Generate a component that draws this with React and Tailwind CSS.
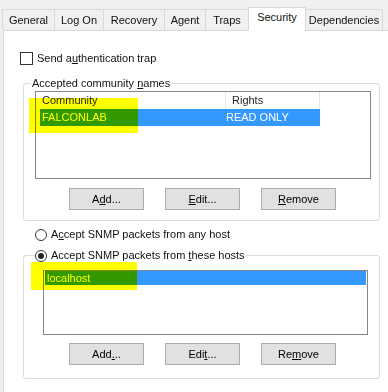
import React from 'react';

const tabs = [
  { label: 'General', w: 'w-[53px]' },
  { label: 'Log On', w: 'w-[50px]' },
  { label: 'Recovery', w: 'w-[62px]' },
  { label: 'Agent', w: 'w-[42px]' },
  { label: 'Traps', w: 'w-[44px]' },
  { label: 'Security', w: 'w-[58px]', active: true },
  { label: 'Dependencies', w: 'w-[78px]' },
];

function Button({ children }) {
  return (
    <button className="w-[75px] h-[22px] border border-[#adadad] bg-[#e1e1e1] text-[11px] text-black flex items-center justify-center">
      {children}
    </button>
  );
}

function Radio({ checked, children }) {
  return (
    <div className="flex items-center gap-[4px] h-[13px]">
      <span className="w-[12px] h-[12px] rounded-full border border-[#333] bg-white flex items-center justify-center">
        {checked && <span className="w-[6px] h-[6px] rounded-full bg-[#222]" />}
      </span>
      <span>{children}</span>
    </div>
  );
}

export default function App() {
  return (
    <div className="relative w-[388px] h-[392px] overflow-hidden bg-[#f0f0f0] font-['Liberation_Sans',Arial,sans-serif] text-[11px] leading-[13px] text-[#111]">
      {/* Tab strip */}
      <div className="flex items-end h-[30px] pl-[3px]">
        {tabs.map((t) =>
          t.active ? (
            <div
              key={t.label}
              className={`${t.w} h-[24px] -ml-px -mb-px relative z-10 bg-white border border-b-0 border-[#d9d9d9] flex items-start justify-center pt-[3px] text-[11px]`}
            >
              {t.label}
            </div>
          ) : (
            <div
              key={t.label}
              className={`${t.w} h-[21px] -ml-px bg-[#f0f0f0] border border-b-0 border-[#d9d9d9] flex items-center justify-center`}
            >
              {t.label}
            </div>
          )
        )}
      </div>

      {/* Tab panel */}
      <div className="ml-[3px] w-[420px] h-[363px] bg-white border-l border-t border-[#d9d9d9] pt-[21px]">
        <div className="ml-[16px] flex items-center gap-[4px] h-[13px]">
          <span className="w-[13px] h-[13px] border border-[#333] bg-white" />
          <span>
            Send a<u className="underline-offset-1">u</u>thentication trap
          </span>
        </div>

        <fieldset className="mt-[12px] ml-[19px] w-[357px] border border-[#dcdcdc] rounded-[3px] pb-[10px]">
          <legend className="ml-[7px] px-[1px]">
            Accepted community <u className="underline-offset-1">n</u>ames
          </legend>
          <div className="ml-[11px] mt-px w-[336px] h-[88px] border border-[#828790] bg-white">
            <div className="flex h-[17px] items-center text-[#1e1e1e]">
              <div className="w-[190px] h-full border-r border-[#e5e5e5] pl-[6px] flex items-center">Community</div>
              <div className="w-[94px] h-full border-r border-[#e5e5e5] pl-[6px] flex items-center">Rights</div>
            </div>
            <div className="ml-[4px] w-[280px] h-[17px] bg-[#3399ff] text-white flex items-center">
              <div className="w-[186px] pl-[2px]">FALCONLAB</div>
              <div>READ ONLY</div>
            </div>
          </div>
          <div className="mt-[9px] ml-[45px] flex gap-[21px]">
            <Button>A<u>d</u>d...</Button>
            <Button><u>E</u>dit...</Button>
            <Button><u>R</u>emove</Button>
          </div>
        </fieldset>

        <div className="mt-[7px] ml-[31px]">
          <Radio>
            A<u>c</u>cept SNMP packets from any host
          </Radio>
        </div>

        <fieldset className="mt-[8px] ml-[19px] w-[357px] border border-[#dcdcdc] rounded-[3px] pb-[13px]">
          <legend className="ml-[10px] px-[1px]">
            <Radio checked>
              Accept SNMP packets from <u>t</u>hese hosts
            </Radio>
          </legend>
          <div className="ml-[19px] mt-[8px] w-[325px] h-[65px] border border-[#828790] bg-white">
            <div className="ml-px w-[321px] h-[14px] bg-[#3399ff] text-white pl-[2px] flex items-center">localhost</div>
          </div>
          <div className="mt-[8px] ml-[45px] flex gap-[21px]">
            <Button>Add<u>.</u>..</Button>
            <Button>Edi<u>t</u>...</Button>
            <Button>Re<u>m</u>ove</Button>
          </div>
        </fieldset>
      </div>

      {/* Highlighter marks */}
      <div className="absolute left-[29px] top-[98px] w-[109px] h-[35px] bg-[#ffff00] mix-blend-multiply pointer-events-none" />
      <div className="absolute left-[31px] top-[262px] w-[106px] h-[28px] bg-[#ffff00] mix-blend-multiply pointer-events-none" />
    </div>
  );
}
